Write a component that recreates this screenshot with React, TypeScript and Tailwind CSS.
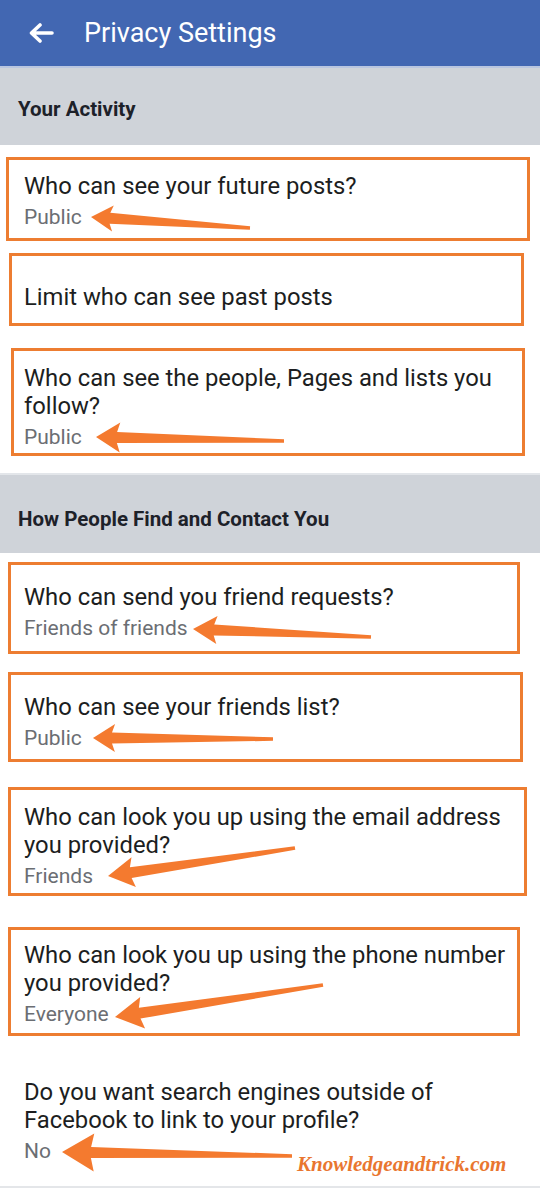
import React from "react";

type Item = {
  title: string[];
  value?: string;
};

function arrowPoints(tx: number, ty: number, ex: number, ey: number, L = 22, H = 13, w1 = 5.5, w2 = 1.8) {
  const dx = ex - tx;
  const dy = ey - ty;
  const len = Math.hypot(dx, dy);
  const ux = dx / len;
  const uy = dy / len;
  const nx = -uy;
  const ny = ux;
  const bx = tx + ux * L;
  const by = ty + uy * L;
  const jx = bx - ux * 3;
  const jy = by - uy * 3;
  const pts = [
    [tx, ty],
    [bx + nx * H, by + ny * H],
    [jx + nx * w1, jy + ny * w1],
    [ex + nx * w2, ey + ny * w2],
    [ex - nx * w2, ey - ny * w2],
    [jx - nx * w1, jy - ny * w1],
    [bx - nx * H, by - ny * H],
  ];
  return pts.map((p) => p[0].toFixed(1) + "," + p[1].toFixed(1)).join(" ");
}

const arrows = [
  { t: [91, 217], e: [250, 228], L: 22, H: 13 },
  { t: [96, 437], e: [284, 441], L: 24, H: 15 },
  { t: [193, 629], e: [371, 637], L: 24, H: 14 },
  { t: [93, 738], e: [273, 739], L: 22, H: 14 },
  { t: [108, 876], e: [295, 848], L: 26, H: 15 },
  { t: [115, 1017], e: [323, 985], L: 28, H: 16 },
  { t: [62, 1152], e: [292, 1156], L: 32, H: 19 },
];

function Row({ item, className }: { item: Item; className: string }) {
  return (
    <div className={className}>
      {item.title.map((line) => (
        <div key={line} className="whitespace-nowrap text-[23.8px] leading-[28px] text-[#1c1e21]">
          {line}
        </div>
      ))}
      {item.value && (
        <div className="mt-[3px] text-[21px] leading-[28px] text-[#6b6e73]">{item.value}</div>
      )}
    </div>
  );
}

function SectionHeader({ label, className }: { label: string; className: string }) {
  return (
    <div className={className}>
      <span className="text-[20.5px] font-bold leading-[24px] text-[#1d2129]">{label}</span>
    </div>
  );
}

export default function App() {
  return (
    <div
      className="relative h-[1189px] w-[540px] overflow-hidden bg-white"
      style={{ fontFamily: "Roboto, 'Noto Sans', sans-serif" }}
    >
      {/* top bar */}
      <div className="flex h-[66px] items-center bg-[#4267b2]">
        <svg width="26" height="20" viewBox="0 0 26 20" className="ml-[28px]">
          <path d="M24 10 H4 M12 2 L3.5 10 L12 18" fill="none" stroke="white" strokeWidth="3.6" strokeLinecap="round" strokeLinejoin="round" />
        </svg>
        <span className="ml-[30px] text-[27px] leading-[30px] text-white">Privacy Settings</span>
      </div>
      <div className="h-[2px] bg-[#b9c6e0]" />

      <SectionHeader
        label="Your Activity"
        className="flex h-[77px] items-center bg-[#cfd3d9] pl-[18px] pt-[4px]"
      />

      <Row
        item={{ title: ["Who can see your future posts?"], value: "Public" }}
        className="ml-[6px] mt-[12px] box-border h-[84px] w-[524px] border-[3px] border-[#ed7d31] pl-[15px] pt-[12px]"
      />
      <Row
        item={{ title: ["Limit who can see past posts"] }}
        className="ml-[9px] mt-[12px] box-border h-[73px] w-[515px] border-[3px] border-[#ed7d31] pl-[12px] pt-[27px]"
      />
      <Row
        item={{ title: ["Who can see the people, Pages and lists you", "follow?"], value: "Public" }}
        className="ml-[11px] mt-[22px] box-border h-[108px] w-[514px] border-[3px] border-[#ed7d31] pl-[10px] pt-[13px]"
      />

      <div className="mt-[17px] h-[2px] bg-[#e3e6ea]" />
      <SectionHeader
        label="How People Find and Contact You"
        className="flex h-[78px] items-center bg-[#cfd3d9] pl-[18px] pt-[10px]"
      />

      <Row
        item={{ title: ["Who can send you friend requests?"], value: "Friends of friends" }}
        className="ml-[8px] mt-[9px] box-border h-[92px] w-[512px] border-[3px] border-[#ed7d31] pl-[13px] pt-[18px]"
      />
      <Row
        item={{ title: ["Who can see your friends list?"], value: "Public" }}
        className="ml-[8px] mt-[18px] box-border h-[90px] w-[515px] border-[3px] border-[#ed7d31] pl-[13px] pt-[18px]"
      />
      <Row
        item={{ title: ["Who can look you up using the email address", "you provided?"], value: "Friends" }}
        className="ml-[8px] mt-[25px] box-border h-[109px] w-[519px] border-[3px] border-[#ed7d31] pl-[13px] pt-[13px]"
      />
      <Row
        item={{ title: ["Who can look you up using the phone number", "you provided?"], value: "Everyone" }}
        className="ml-[8px] mt-[31px] box-border h-[109px] w-[512px] border-[3px] border-[#ed7d31] pl-[13px] pt-[11px]"
      />
      <Row
        item={{ title: ["Do you want search engines outside of", "Facebook to link to your profile?"], value: "No" }}
        className="mt-[42px] h-[108px] pl-[24px]"
      />
      <div className="h-[2px] bg-[#e4e6e9]" />

      {/* annotation arrows */}
      <svg className="pointer-events-none absolute left-0 top-0" width="540" height="1189" viewBox="0 0 540 1189">
        {arrows.map((a, i) => (
          <polygon key={i} points={arrowPoints(a.t[0], a.t[1], a.e[0], a.e[1], a.L, a.H)} fill="#f47a2f" />
        ))}
      </svg>

      <div
        className="pointer-events-none absolute left-[297px] top-[1151px] text-[21px] font-bold italic leading-[26px] text-[#e9762f]"
        style={{ fontFamily: "'Liberation Serif', serif", textShadow: "1px 1px 0 #fff, -1px -1px 0 #fff" }}
      >
        Knowledgeandtrick.com
      </div>
    </div>
  );
}
